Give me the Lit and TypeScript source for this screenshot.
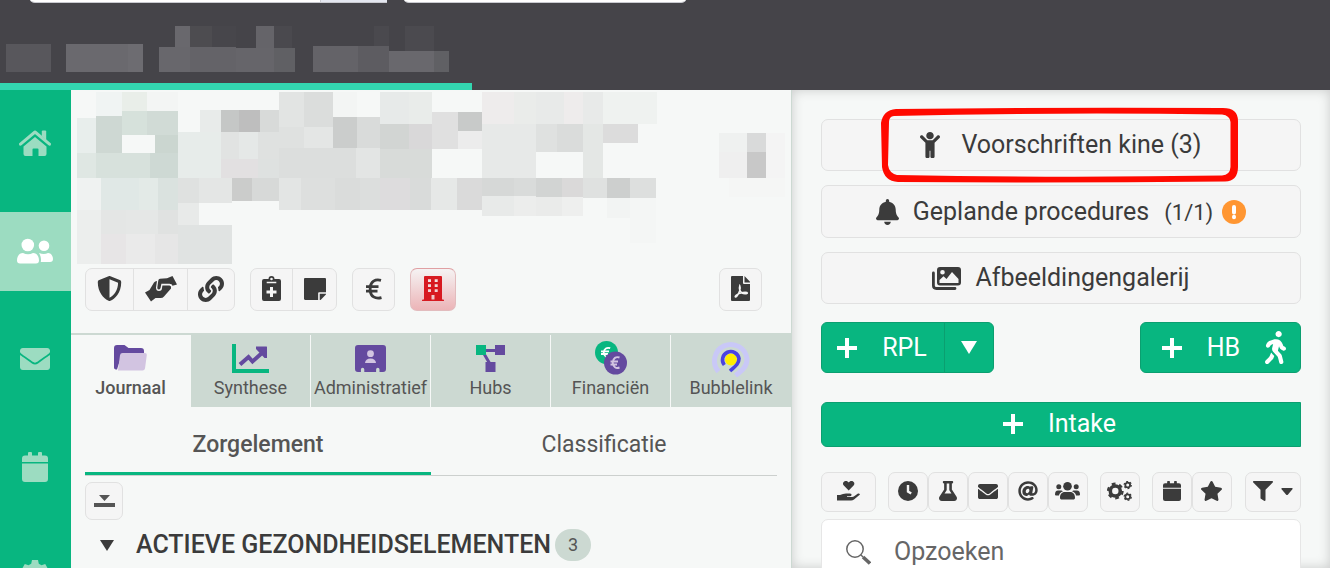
import { LitElement, html, svg, css, type TemplateResult, type SVGTemplateResult } from "lit";
import { customElement, property, state } from "lit/decorators.js";
import { classMap } from "lit/directives/class-map.js";

type Block = [number, number, number, number, string];
type Glyph = { box: string; body: SVGTemplateResult };

const GLYPHS: Record<string, Glyph> = {
  home: {
    box: "0 0 32 26",
    body: svg`<path d="M1.5 14.2 16 2l14.5 12.2" fill="none" stroke="currentColor" stroke-width="3" stroke-linecap="round" stroke-linejoin="round"/><path d="M22.800 1.500q0-1 1-1h2.400q1 0 1 1V10l-4.400-3.700z"/><path d="M4.500 16.500 16 7l11.500 9.500V24q0 2-2 2h-6v-6.500q0-1-1-1h-4q-1 0-1 1V26h-7q-2 0-2-2z"/>`,
  },
  users: {
    box: "0 0 36 26",
    body: svg`<circle cx="10.800" cy="7" r="6.300"/><circle cx="27" cy="7.700" r="5.300"/><path d="M6 15q5 2.500 10 0c4 0 6 3.500 6 7.500 0 2-1 3-3 3H3c-2 0-3-1-3-3 0-4 2-7.500 6-7.500z"/><path d="M22 15q5 2 9 0c3 0 5 3 5 6 0 2-1 3-3 3h-9.200c.6-3-.1-6.300-1.800-9z"/>`,
  },
  mail: {
    box: "0 64 512 384",
    body: svg`<path d="M502.300 190.800c3.900-3.100 9.700-.2 9.700 4.700V400c0 26.500-21.500 48-48 48H48c-26.500 0-48-21.500-48-48V195.600c0-5 5.700-7.800 9.700-4.700 22.400 17.400 52.100 39.500 154.100 113.600 21.100 15.400 56.700 47.800 92.200 47.600 35.700.3 72-32.800 92.300-47.600 102-74.100 131.600-96.300 154-113.700zM256 320c23.200.4 56.600-29.200 73.400-41.400 132.700-96.300 142.800-104.700 173.400-128.700 5.800-4.500 9.200-11.500 9.200-18.900v-19c0-26.500-21.500-48-48-48H48c-26.500 0-48 21.500-48 48v19c0 7.400 3.400 14.300 9.200 18.900 30.600 23.900 40.700 32.400 173.400 128.700 16.800 12.200 50.200 41.800 73.400 41.400z"/>`,
  },
  calendar: {
    box: "0 0 26 30",
    body: svg`<path d="M6 1q0-1 1-1h2q1 0 1 1v2.500h6V1q0-1 1-1h2q1 0 1 1v2.500h3q3 0 3 3V10H0V6.500q0-3 3-3h3zM0 11.500h26V27q0 3-3 3H3q-3 0-3-3z"/>`,
  },
  gear: {
    box: "0 0 30 30",
    body: svg`<path fill-rule="evenodd" d="M12 0h6l.8 3.800 2.700 1.500L25.200 4l3 5.200-2.900 2.600v3.400l2.900 2.600-3 5.200-3.700-1.300-2.700 1.500L18 28h-6l-.8-4.800-2.700-1.500L4.800 23l-3-5.200 2.900-2.600v-3.400L1.800 9.200l3-5.200 3.700 1.300 2.700-1.500zM15 9.500a4.500 4.500 0 1 0 0 9 4.500 4.500 0 0 0 0-9z"/>`,
  },
  shield: {
    box: "0 0 512 512",
    body: svg`<path d="M466.500 83.700l-192-80a48.150 48.150 0 0 0-36.900 0l-192 80C27.700 91.100 16 108.600 16 128c0 198.500 114.500 335.700 221.500 380.300 11.800 4.900 25.100 4.900 36.900 0C360.100 472.600 496 349.300 496 128c0-19.400-11.700-36.900-29.500-44.300zM256.100 446.300l-.1-381 175.900 73.300c-3.300 151.400-82.100 261.100-175.800 307.700z"/>`,
  },
  hands: {
    box: "0 0 32 26",
    body: svg`<path d="M0 16.500 4.500 14 9 6.500q1-1.500 3-1.500l-1 6.500q0 3.500 3 3.500t3-3l.4-2.500h7.100l1.500 1v2l-7 8q-1.200 1.500-3.500 1.500h-5L6 25.500z"/><path d="M32 8.500 27.500 0 22 2.300l-7 .5q-1.400.2-1.700 1.600l-1 7q-.2 1.900 1.400 2.100 1.600.1 1.900-1.700l.8-4h8.100q2.500 0 3 2z"/>`,
  },
  link: {
    box: "0 0 512 512",
    body: svg`<path d="M326.612 185.391c59.747 59.809 58.927 155.698.36 214.590-.11.120-.24.250-.36.370l-67.200 67.200c-59.270 59.270-155.699 59.262-214.960 0-59.270-59.260-59.270-155.700 0-214.960l37.106-37.106c9.840-9.840 26.786-3.300 27.294 10.606.648 17.722 3.826 35.527 9.690 52.721 1.986 5.822.567 12.262-3.783 16.612l-13.087 13.087c-28.026 28.026-28.905 73.660-1.155 101.960 28.024 28.579 74.086 28.749 102.325.510l67.200-67.190c28.191-28.191 28.073-73.757 0-101.830-3.701-3.694-7.429-6.564-10.341-8.569a16.037 16.037 0 0 1-6.947-12.606c-.396-10.567 3.348-21.456 11.698-29.806l21.054-21.055c5.521-5.521 14.182-6.199 20.584-1.731a152.482 152.482 0 0 1 20.522 17.197zM467.547 44.449c-59.261-59.262-155.690-59.270-214.960 0l-67.200 67.200c-.12.120-.25.250-.36.370-58.566 58.892-59.387 154.781.36 214.590a152.454 152.454 0 0 0 20.521 17.196c6.402 4.468 15.064 3.789 20.584-1.731l21.054-21.055c8.350-8.350 12.094-19.239 11.698-29.806a16.037 16.037 0 0 0-6.947-12.606c-2.912-2.005-6.640-4.875-10.341-8.569-28.073-28.073-28.191-73.639 0-101.830l67.200-67.190c28.239-28.239 74.300-28.069 102.325.510 27.750 28.300 26.872 73.934-1.155 101.960l-13.087 13.087c-4.350 4.350-5.769 10.790-3.783 16.612 5.864 17.194 9.042 34.999 9.690 52.721.509 13.906 17.454 20.446 27.294 10.606l37.106-37.106c59.271-59.259 59.271-155.699.001-214.959z"/>`,
  },
  clipboard: {
    box: "0 0 19 25",
    body: svg`<path fill-rule="evenodd" d="M2 3h4.500a3 3 0 0 1 6 0H17q2 0 2 2v18q0 2-2 2H2q-2 0-2-2V5q0-2 2-2zm7.500-1.300a1.300 1.300 0 1 0 0 2.600 1.300 1.300 0 0 0 0-2.600zM4.700 5.700v1.600h9.600V5.700zM8 11v3.500H4.500v3H8V21h3v-3.500h3.500v-3H11V11z"/>`,
  },
  note: {
    box: "0 32 448 448",
    body: svg`<path d="M312 320h136V56c0-13.300-10.700-24-24-24H24C10.700 32 0 42.700 0 56v400c0 13.300 10.700 24 24 24h264V344c0-13.200 10.800-24 24-24zm129 55l-98 98c-4.500 4.500-10.600 7-17 7h-6V352h128v6.100c0 6.300-2.500 12.400-7 16.900z"/>`,
  },
  euro: {
    box: "0 0 16 22",
    body: svg`<path d="M15 2.300C9 .6 4.800 3.800 4.200 9v4C4.800 18.200 9 21.400 15.500 19.700M0 8.700h12.500M0 13.200h11.500" fill="none" stroke="currentColor" stroke-width="2.800"/>`,
  },
  building: {
    box: "0 0 22 25",
    body: svg`<path fill-rule="evenodd" d="M3 0h16q1 0 1 1v22.500h1q1 0 1 1v.5H0v-.5q0-1 1-1h1V1q0-1 1-1zm3 3.300v2.700h3V3.300zm0 5v2.700h3V8.300zm0 5V16h3v-2.700zm6.700-10v2.700h3V3.300zm0 5v2.700h3V8.300zm0 5V16h3v-2.700zM9.500 19v4.500h3V19z"/>`,
  },
  pdf: {
    box: "0 0 19 25",
    body: svg`<path d="M1 0h11v7q0 1 1 1h6v16q0 1-1 1H1q-1 0-1-1V1q0-1 1-1zM13.500 0 19 5.700v.8h-5.500z"/><path d="M8.800 9.800c-.8 2.500.2 5.500 2.200 7.200 1.600 1 5.500.7 5.400.1-.5-1.500-8-.6-11.300 2.200-1.800 1.700-.6 2.600.9.700 2.200-2.700 4-7.700 2.800-10.200z" fill="none" stroke="#f5f5f5" stroke-width="1.500"/>`,
  },
  folder: {
    box: "0 0 33 26",
    body: svg`<path d="M0 3q0-3 3-3h7.500l4 3H27q3 0 3 3v3H8L3 24.500q-3 0-3-2z" fill="#644a9f"/><path d="M8.500 8H31q2 0 1.800 2L31 23.500q-.4 2-2.500 2H4L6 10.300Q6.300 8 8.500 8z" fill="#d2c4e1"/>`,
  },
  chart: {
    box: "0 0 37 29",
    body: svg`<path d="M2 0v27h35" fill="none" stroke="#08b680" stroke-width="4"/><path d="M8 20.500 16.500 13l4 4.500L30 9" fill="none" stroke="#644a9f" stroke-width="4"/><path d="M24 2.500h10.500q.5 0 .5.500v11L32.500 14 24 5z" fill="#644a9f"/>`,
  },
  contact: {
    box: "0 0 31 27",
    body: svg`<path d="M3 0h25q3 0 3 3v21q0 3-3 3h-3.500v-2.500a1.700 1.700 0 0 0-3.400 0V27H9.300v-2.500a1.700 1.700 0 0 0-3.400 0V27H3q-3 0-3-3V3q0-3 3-3z" fill="#644a9f"/><circle cx="15.500" cy="8.700" r="3.400" fill="#d2c4e1"/><path d="M10 18q.5-4.500 5.500-4.500T21 18z" fill="#d2c4e1"/>`,
  },
  hubs: {
    box: "0 0 29 27",
    body: svg`<path d="M6 5.500h18M7 7l7 12" fill="none" stroke="#644a9f" stroke-width="3"/><path d="M19 0h10v10H19zM9.500 17h10v10h-10z" fill="#644a9f"/><path d="M0 0h10v10H0z" fill="#08b680"/>`,
  },
  coins: {
    box: "0 0 32 34",
    body: svg`<circle cx="11.500" cy="11.500" r="11.500" fill="#08b680"/><path d="M15.200 7.200C12 6 9 7.500 8.700 11.500c.3 4 3.300 5.500 6 4.500M6 10.300h8M6 13h7" fill="none" stroke="#fff" stroke-width="1.800"/><circle cx="20.500" cy="22" r="11.500" fill="#644a9f"/><path d="M24.500 16.500C21 15.300 18.200 17 17.700 21.500c.5 4.700 3.300 6.300 6.800 5M15.500 20.500H23M15.500 23.500H22" fill="none" stroke="#d2c4e1" stroke-width="1.900"/>`,
  },
  bubble: {
    box: "0 0 38 38",
    body: svg`<path d="M6.500 32.500A16.300 16.300 0 1 1 35 20c0 8-5.500 12-11.500 16.500" fill="none" stroke="#c9c8f7" stroke-width="5"/><circle cx="19" cy="20.500" r="6" fill="#ffee00"/><path d="M12.300 26A8.300 8.300 0 1 1 27 19.500c0 5.500-4 8-9 12.500" fill="none" stroke="#4a43e0" stroke-width="3.600"/>`,
  },
  collapse: {
    box: "0 0 21 12",
    body: svg`<path d="M5 0h11l-5.500 6zM0 8h21v4H0z"/>`,
  },
  child: {
    box: "0 0 384 512",
    body: svg`<path d="M120 72c0-39.765 32.235-72 72-72s72 32.235 72 72c0 39.764-32.235 72-72 72s-72-32.236-72-72zm254.627 1.373c-12.496-12.497-32.758-12.497-45.254 0L242.745 160H141.254L54.627 73.373c-12.496-12.497-32.758-12.497-45.254 0-12.497 12.497-12.497 32.758 0 45.255L104 213.254V480c0 17.673 14.327 32 32 32h16c17.673 0 32-14.327 32-32V368h16v112c0 17.673 14.327 32 32 32h16c17.673 0 32-14.327 32-32V213.254l94.627-94.627c12.497-12.496 12.497-32.757 0-45.254z"/>`,
  },
  bell: {
    box: "0 0 448 512",
    body: svg`<path d="M224 512c35.320 0 63.970-28.650 63.970-64H160.030c0 35.350 28.650 64 63.970 64zm215.390-149.710c-19.320-20.760-55.470-51.990-55.470-154.290 0-77.700-54.480-139.900-127.940-155.160V32c0-17.670-14.320-32-31.980-32s-31.980 14.330-31.980 32v20.840C118.560 68.100 64.080 130.300 64.080 208c0 102.300-36.150 133.530-55.470 154.290-6 6.450-8.660 14.160-8.610 21.710.11 16.400 12.980 32 32.100 32h383.800c19.120 0 32-15.600 32.100-32 .05-7.550-2.610-15.270-8.610-21.710z"/>`,
  },
  images: {
    box: "0 0 29 23",
    body: svg`<path d="M1.400 6v12.500q0 3 3 3H23" fill="none" stroke="currentColor" stroke-width="2.800" stroke-linecap="round"/><path fill-rule="evenodd" d="M8 0h18q3 0 3 3v12.500q0 3-3 3H8q-3 0-3-3V3q0-3 3-3zm2.500 3a2.300 2.300 0 1 0 0 4.600 2.300 2.300 0 0 0 0-4.600zM20 5l-5.500 7-3-2.800L7.500 13v3h19v-4z"/>`,
  },
  alert: {
    box: "0 0 24 24",
    body: svg`<circle cx="12" cy="12" r="12" fill="#ff9632"/><path d="M12 7v5.500M12 16.800v.4" stroke="#fff" stroke-width="4" stroke-linecap="round"/>`,
  },
  plus: { box: "0 0 20 20", body: svg`<path d="M8 0h4v8h8v4h-8v8H8v-8H0V8h8z"/>` },
  down: { box: "0 0 16 13", body: svg`<path d="M0 0h16L8 13z"/>` },
  caret: { box: "0 0 12 7", body: svg`<path d="M1 0h10q1 .3.400 1.300L7 6.500q-1 1-2 0L.6 1.300Q0 .3 1 0z"/>` },
  walk: {
    box: "0 0 320 512",
    body: svg`<path d="M208 96c26.500 0 48-21.500 48-48S234.500 0 208 0s-48 21.500-48 48 21.500 48 48 48zm94.500 149.100l-23.300-11.800-9.700-29.400c-14.700-44.600-55.700-75.800-102.200-75.900-36-.1-55.900 10.100-93.300 25.200-21.600 8.700-39.300 25.200-49.700 46.200L17.600 213c-7.800 15.800-1.500 35 14.200 42.900 15.600 7.900 34.600 1.500 42.500-14.300L81 228c3.500-7 9.300-12.500 16.500-15.400l26.800-10.800-15.200 60.700c-5.200 20.800.4 42.900 14.900 58.800l59.900 65.400c7.200 7.900 12.300 17.400 14.900 27.700l18.300 73.300c4.300 17.100 21.700 27.600 38.800 23.300 17.100-4.300 27.600-21.700 23.300-38.800l-22.200-89c-2.600-10.300-7.700-19.900-14.900-27.700l-45.500-49.700 17.200-68.700 5.500 16.500c5.300 16.100 16.700 29.400 31.700 37l23.300 11.800c15.600 7.900 34.600 1.500 42.500-14.300 7.700-15.700 1.400-35.100-14.300-43zM73.600 385.800c-3.200 8.100-8 15.400-14.200 21.500l-50 50.100c-12.500 12.500-12.500 32.800 0 45.300s32.700 12.500 45.200 0l59.400-59.400c6.100-6.100 10.900-13.400 14.200-21.500l13.500-33.800c-55.300-60.300-38.700-41.800-47.400-53.700l-20.700 51.500z"/>`,
  },
  care: {
    box: "0 0 23 20",
    body: svg`<path d="M11.700 9.500 6.800 4.600C5 2.500 6.500 0 8.800 0c1.400 0 2.300.6 2.900 1.600C12.300.6 13.200 0 14.500 0c2.300 0 3.900 2.500 2.100 4.600z"/><path d="M0 14h3q3-1.500 6-1.500h4q2 .2 1.500 1.700-.4 1-2 1H10v.9h5q1.300 0 2.500-1l3.500-2.600q1.500-.3 2 1l-6 5q-1.200 1-3 1H0z"/>`,
  },
  clock: {
    box: "0 0 20 20",
    body: svg`<circle cx="10" cy="10" r="10"/><path d="M10 4v6.500l3.200 2" fill="none" stroke="#f5f5f5" stroke-width="2.400"/>`,
  },
  flask: {
    box: "0 0 448 512",
    body: svg`<path d="M437.200 403.500L320 215V64h8c13.300 0 24-10.700 24-24V24c0-13.300-10.700-24-24-24H120c-13.300 0-24 10.700-24 24v16c0 13.300 10.700 24 24 24h8v151L10.800 403.500C-18.500 450.600 15.300 512 70.900 512h306.200c55.700 0 89.400-61.500 60.100-108.500zM137.900 320l48.200-77.600c3.700-5.200 5.800-11.600 5.800-18.400V64h64v160c0 6.900 2.200 13.200 5.800 18.400l48.200 77.600h-172z"/>`,
  },
  at: {
    box: "0 0 512 512",
    body: svg`<path d="M256 8C118.941 8 8 118.919 8 256c0 137.059 110.919 248 248 248 48.154 0 95.342-14.140 135.408-40.223 12.005-7.815 14.625-24.288 5.552-35.372l-10.177-12.433c-7.671-9.371-21.179-11.667-31.373-5.129C325.920 429.757 291.314 440 256 440c-101.458 0-184-82.542-184-184S154.542 72 256 72c100.139 0 184 57.619 184 160 0 38.786-21.093 79.742-58.170 83.693-17.349-.454-16.910-12.857-13.476-30.024l23.433-121.110C394.653 149.750 383.308 136 368.225 136h-44.981a13.518 13.518 0 0 0-13.432 11.993l-.010.092c-14.697-17.901-40.448-21.775-59.971-21.775-74.580 0-137.831 62.234-137.831 151.460 0 65.303 36.785 105.870 96 105.870 26.984 0 57.369-15.637 74.991-38.333 9.522 34.104 40.613 34.104 70.671 34.104C462.609 379.410 504 307.798 504 232 504 95.653 394.023 8 256 8zm-21.680 304.430c-22.249 0-36.070-15.623-36.070-40.771 0-44.993 30.779-72.729 58.630-72.729 22.292 0 35.601 15.241 35.601 40.770 0 45.061-33.875 72.730-58.161 72.730z"/>`,
  },
  group: {
    box: "0 0 25 18",
    body: svg`<circle cx="12.500" cy="4.300" r="4.300"/><circle cx="3.800" cy="4.800" r="2.500"/><circle cx="21.200" cy="4.800" r="2.500"/><path d="M10 10h5c3.500 0 5 2.500 5 5.500 0 1.500-.5 2-2 2H7c-1.500 0-2-.5-2-2C5 12.500 6.500 10 10 10zM3 8.500h3.500L8 9.300Q4.500 10.500 4 13.500H1q-1 0-1-1 0-4 3-4zM22 8.500h-3.500l-1.500.8q3.500 1.200 4 4.200h3q1 0 1-1 0-4-3-4z"/>`,
  },
  gears: {
    box: "0 0 25 20",
    body: svg`<circle cx="8.300" cy="10" r="5" fill="none" stroke="currentColor" stroke-width="3.600"/><circle cx="8.300" cy="10" r="7.300" fill="none" stroke="currentColor" stroke-width="2.200" stroke-dasharray="3.820"/><circle cx="20.700" cy="4" r="2.400" fill="none" stroke="currentColor" stroke-width="1.800"/><circle cx="20.700" cy="4" r="3.600" fill="none" stroke="currentColor" stroke-width="1.200" stroke-dasharray="1.880"/><circle cx="20.700" cy="15.800" r="2.400" fill="none" stroke="currentColor" stroke-width="1.800"/><circle cx="20.700" cy="15.800" r="3.600" fill="none" stroke="currentColor" stroke-width="1.200" stroke-dasharray="1.880"/>`,
  },
  star: {
    box: "20 0 536 512",
    body: svg`<path d="M259.300 17.800L194 150.200 47.900 171.500c-26.200 3.800-36.700 36.100-17.700 54.600l105.700 103-25 145.500c-4.500 26.300 23.200 46 46.400 33.700L288 439.600l130.700 68.700c23.200 12.200 50.900-7.400 46.400-33.700l-25-145.500 105.700-103c19-18.500 8.500-50.800-17.700-54.600L382 150.200 316.700 17.800c-11.700-23.600-45.600-23.900-57.400 0z"/>`,
  },
  filter: {
    box: "0 0 512 512",
    body: svg`<path d="M487.976 0H24.028C2.710 0-8.047 25.866 7.058 40.971L192 225.941V432c0 7.831 3.821 15.170 10.237 19.662l80 55.980C298.020 518.690 320 507.493 320 487.980V225.941l184.947-184.970C520.021 25.896 509.338 0 487.976 0z"/>`,
  },
  search: {
    box: "0 0 25 25",
    body: svg`<circle cx="9" cy="9" r="8.200" fill="none" stroke="currentColor" stroke-width="1.500"/><path d="m15 15 2 2" stroke="currentColor" stroke-width="1.500"/><path d="m17 17 7 6.500" stroke="currentColor" stroke-width="3.500"/>`,
  },
};

const icon = (name: string, width: number, height: number) =>
  html`<svg class="icon" width=${width} height=${height} viewBox=${GLYPHS[name].box} preserveAspectRatio="none" aria-hidden="true">${GLYPHS[name].body}</svg>`;

const MENU_BLOCKS: Block[] = [
  [6, 44, 45, 28, "#58575c"], [66, 44, 62, 28, "#6a696e"], [128, 44, 15, 28, "#6d6c71"],
  [159, 47, 31, 25, "#68676c"], [175, 26, 15, 21, "#69686d"], [190, 47, 46, 25, "#646368"],
  [190, 26, 22, 21, "#4d4c50"], [212, 26, 24, 21, "#47464b"], [236, 48, 38, 24, "#66656a"],
  [256, 26, 18, 22, "#656469"], [274, 48, 21, 24, "#606064"], [274, 26, 18, 22, "#4a494e"],
  [313, 46, 45, 26, "#646368"], [358, 46, 31, 26, "#5d5c61"], [389, 51, 45, 21, "#69686d"],
  [434, 51, 15, 21, "#606064"], [374, 26, 15, 20, "#4a494e"], [405, 26, 29, 25, "#4b4a4f"],
];

const PATIENT_BLOCKS: Block[] = [
  [96, 92, 26, 24, "#f0f4f3"], [122, 92, 25, 19, "#e9eee9"], [147, 92, 31, 19, "#f3f5f4"],
  [77, 118, 19, 35, "#e8eeec"], [96, 116, 26, 37, "#ced8d3"], [122, 111, 25, 24, "#d6e1db"],
  [147, 111, 31, 24, "#d1dbd6"], [155, 135, 23, 18, "#cbd6d0"], [77, 153, 19, 25, "#dfe7e3"],
  [96, 153, 54, 25, "#d7e1dc"], [150, 153, 28, 25, "#ced9d4"], [200, 110, 21, 22, "#e8ebea"],
  [221, 110, 18, 22, "#c5c7c6"], [239, 110, 21, 22, "#bebebe"], [260, 110, 19, 22, "#d8dad9"],
  [178, 132, 43, 46, "#e7ecea"], [221, 132, 18, 27, "#e1e3e2"], [239, 132, 19, 27, "#e5e8e7"],
  [258, 132, 21, 27, "#dfe1e0"], [221, 159, 37, 19, "#e2e0e1"], [258, 159, 21, 19, "#dee1e0"],
  [77, 178, 24, 32, "#eff2f1"], [101, 178, 38, 32, "#e0e8e6"], [139, 178, 19, 32, "#e3eae7"],
  [158, 178, 20, 32, "#dae2df"], [178, 178, 21, 25, "#dfe1e0"], [199, 178, 33, 25, "#e4e6e5"],
  [232, 178, 20, 23, "#cbcccb"], [252, 178, 27, 23, "#d7d9d8"], [178, 203, 21, 22, "#e8eae9"],
  [77, 210, 24, 54, "#eceeed"], [101, 210, 25, 24, "#e4e6e5"], [126, 210, 32, 24, "#e5e7e6"],
  [158, 210, 20, 24, "#e0e2e1"], [101, 234, 25, 30, "#e7e5e6"], [126, 234, 29, 30, "#eaeaea"],
  [155, 234, 23, 30, "#e6e6e6"], [178, 225, 54, 39, "#e0e3e2"],
  [279, 92, 25, 35, "#e2e4e3"], [304, 92, 29, 35, "#dbdddc"], [333, 92, 24, 25, "#f3f5f4"],
  [279, 127, 25, 21, "#dfe1e0"], [304, 127, 29, 21, "#e4e6e5"], [333, 117, 24, 31, "#cbcdcc"],
  [357, 117, 23, 31, "#d9dbda"], [380, 92, 29, 32, "#e7eae9"], [409, 92, 23, 32, "#e9ecea"],
  [380, 124, 29, 25, "#d2d5d3"], [409, 124, 23, 25, "#d9d8d9"], [432, 112, 26, 37, "#e0e0e0"],
  [458, 112, 24, 19, "#c8cac9"], [458, 131, 24, 18, "#ececec"], [279, 148, 77, 30, "#dcdedd"],
  [356, 148, 24, 30, "#e3e5e4"], [380, 149, 52, 29, "#d8dbd9"], [279, 178, 22, 32, "#e3e5e4"],
  [301, 178, 34, 32, "#dddfde"], [335, 178, 25, 32, "#dadcdb"], [360, 178, 20, 32, "#dcdedd"],
  [380, 178, 30, 32, "#dddcdd"], [410, 178, 21, 32, "#d9dbda"], [431, 178, 26, 32, "#e6e8e7"],
  [457, 178, 25, 32, "#dadada"],
  [482, 92, 32, 32, "#eeecec"], [514, 92, 22, 32, "#eaecea"], [536, 92, 28, 32, "#e8eae9"],
  [564, 92, 19, 32, "#eeecec"], [583, 92, 20, 32, "#e8eae9"], [603, 92, 54, 32, "#eff2f0"],
  [482, 124, 54, 54, "#e7e9e8"], [536, 124, 21, 28, "#dfe1e0"], [557, 124, 26, 28, "#dadcdb"],
  [583, 124, 20, 54, "#e4e7e5"], [603, 124, 35, 19, "#dcdcdc"], [482, 178, 32, 18, "#d6d8d7"],
  [514, 178, 22, 18, "#d9dbda"], [536, 178, 26, 19, "#d2d4d3"], [562, 178, 21, 19, "#dad9d9"],
  [583, 178, 24, 20, "#dfe1e0"], [607, 178, 23, 20, "#cdcfce"], [630, 178, 26, 20, "#dddfde"],
  [482, 196, 32, 20, "#e8eae9"], [514, 196, 22, 20, "#ecedec"], [536, 197, 26, 19, "#eaebea"],
  [562, 197, 21, 19, "#eeefee"], [607, 198, 23, 20, "#f2f4f3"], [630, 198, 26, 45, "#f4f6f5"],
  [719, 133, 28, 19, "#eff1f0"], [747, 133, 19, 19, "#d9dada"], [766, 133, 19, 45, "#f4f4f4"],
  [719, 152, 28, 26, "#efefef"], [747, 152, 19, 26, "#c8c8c8"], [729, 178, 56, 19, "#f5f6f5"],
];

const mosaic = (blocks: Block[], x: number, y: number, w: number, h: number) =>
  html`<svg class="mosaic" width=${w} height=${h} viewBox="${x} ${y} ${w} ${h}" shape-rendering="crispEdges" aria-hidden="true">
    ${blocks.map(([bx, by, bw, bh, c]) => svg`<rect x=${bx} y=${by} width=${bw} height=${bh} fill=${c}/>`)}
  </svg>`;

const base = css`
  * { box-sizing: border-box; }
  button, input { font: inherit; color: inherit; margin: 0; padding: 0; border: 0; background: none; }
  button { cursor: pointer; display: flex; align-items: center; justify-content: center; }
  a { color: inherit; text-decoration: none; }
  h2 { margin: 0; }
  .icon, .mosaic { display: block; flex: none; fill: currentColor; }
`;

@customElement("top-bar")
class TopBar extends LitElement {
  static styles = [base, css`
    :host { display: flex; flex-direction: column; height: 90px; background: #454449; }
    .fields { display: flex; align-items: flex-end; gap: 16px; height: 3px; padding-left: 29px; overflow: hidden; }
    .lookup { display: flex; flex: none; height: 36px; width: 358px; border-bottom: 1px solid #c9cad0; border-radius: 6px 0 0 6px; overflow: hidden; background: #fff; }
    .lookup input { flex: 1; min-width: 0; }
    .lookup button { width: 67px; background: #e4e7f0; border-left: 1px solid #c9cad0; }
    .field { flex: none; width: 284px; height: 36px; background: #fff; border-bottom: 1px solid #c9cad0; border-radius: 6px; }
    .menu { flex: 1; padding: 23px 0 0 6px; }
    .progress { width: 472px; max-width: 100%; height: 7px; background: #33d6b0; }
  `];
  render() {
    return html`
      <div class="fields">
        <div class="lookup"><input type="text" aria-label="Zoeken" /><button aria-label="Zoek"></button></div>
        <input class="field" type="text" aria-label="Patiënt" />
      </div>
      <div class="menu">${mosaic(MENU_BLOCKS, 6, 26, 443, 46)}</div>
      <div class="progress"></div>`;
  }
}

@customElement("side-nav")
class SideNav extends LitElement {
  static styles = [base, css`
    :host { display: flex; flex-direction: column; gap: 29px; padding-top: 14px; background: #08b680; color: #9cdcc1; overflow: hidden; }
    .item { display: flex; align-items: center; justify-content: center; flex: none; height: 79px; padding: 0 2px 2px 0; }
    .active { background: #9cdcc1; color: #fff; }
  `];
  render() {
    const items: [string, string, number, number][] = [
      ["home", "Start", 32, 26], ["users", "Patiënten", 36, 26], ["mail", "Berichten", 30, 22],
      ["calendar", "Agenda", 26, 30], ["gear", "Instellingen", 30, 30],
    ];
    return items.map(([g, label, w, h]) => html`
      <a href="#${g}" aria-label=${label} class=${classMap({ item: true, active: g === "users" })}>${icon(g, w, h)}</a>`);
  }
}

@customElement("patient-panel")
class PatientPanel extends LitElement {
  @state() tab = "Journaal";
  @state() view = "Zorgelement";

  static styles = [base, css`
    :host { display: block; min-width: 0; overflow: hidden; color: #555; }
    .mosaic { margin-bottom: 4px; }
    .tools { display: flex; gap: 15px; padding: 0 29px 0 14px; margin-bottom: 22px; color: #3b3b3b; }
    .set { display: flex; height: 43px; border: 1px solid #e1e1e1; border-radius: 7px; background: #f5f5f5; overflow: hidden; }
    .set button { padding-bottom: 2px; }
    .set button + button { border-left: 1px solid #e1e1e1; }
    .s { width: 41px; }
    .m { width: 44px; }
    .l { width: 47px; }
    .xl { width: 54px; }
    .urgent { border-color: #e2bcbe; border-top-color: #e0a0a3; background: linear-gradient(#f5f3f3, #ecb4b7); color: #d71920; }
    .end { margin-left: auto; }
    .tabs { display: grid; grid-template-columns: repeat(6, 1fr); border-top: 2px solid #ccd9d2; }
    .tab { flex-direction: column; justify-content: flex-start; height: 72px; min-width: 0; background: #ccd9d2; border-right: 1px solid #f6f8f7; font-size: 18px; line-height: 22px; }
    .tab:last-child { border-right: 0; }
    .tab.on { background: none; font-weight: 500; }
    .art { display: flex; align-items: center; justify-content: center; height: 38px; margin-top: 4px; }
    .tab span { height: 22px; }
    .views { display: grid; grid-template-columns: 1fr 1fr; margin: 0 14px 6px; border-bottom: 1px solid #ccd0ce; }
    .view { height: 68px; padding-top: 11px; border-bottom: 3px solid transparent; font-size: 23px; line-height: 28px; }
    .view.on { font-weight: 500; border-color: #08b680; }
    .fold { width: 38px; height: 38px; margin-left: 14px; border: 1px solid #e1e1e1; border-radius: 7px; background: #f5f5f5; }
    .section { display: flex; align-items: center; margin: 9px 0 0 29px; color: #3b3b3b; }
    .section h2 { margin: 0 4px 0 22px; font-size: 25px; line-height: 32px; font-weight: 500; white-space: nowrap; }
    .count { padding: 4px 13px; border-radius: 16px; background: #ccd9d2; color: #555; font-size: 18px; line-height: 24px; }
  `];

  render() {
    const tabs: [string, string, number, number][] = [
      ["Journaal", "folder", 33, 26], ["Synthese", "chart", 37, 29], ["Administratief", "contact", 31, 27],
      ["Hubs", "hubs", 29, 27], ["Financiën", "coins", 32, 34], ["Bubblelink", "bubble", 38, 38],
    ];
    return html`
      ${mosaic(PATIENT_BLOCKS, 71, 90, 720, 174)}
      <div class="tools">
        <div class="set">
          <button class="l" aria-label="Toegang">${icon("shield", 25, 25)}</button>
          <button class="xl" aria-label="Therapeutische relatie">${icon("hands", 32, 26)}</button>
          <button class="l" aria-label="Koppeling">${icon("link", 26, 26)}</button>
        </div>
        <div class="set">
          <button class="s" aria-label="Medisch dossier">${icon("clipboard", 19, 25)}</button>
          <button class="m" aria-label="Nota">${icon("note", 22, 22)}</button>
        </div>
        <div class="set"><button class="s" aria-label="Facturatie">${icon("euro", 16, 22)}</button></div>
        <div class="set urgent"><button class="m" aria-label="Instelling">${icon("building", 22, 25)}</button></div>
        <div class="set end"><button class="s" aria-label="PDF">${icon("pdf", 19, 25)}</button></div>
      </div>
      <nav class="tabs">
        ${tabs.map(([label, g, w, h]) => html`
          <button class=${classMap({ tab: true, on: this.tab === label })} @click=${() => (this.tab = label)}>
            <div class="art">${icon(g, w, h)}</div><span>${label}</span>
          </button>`)}
      </nav>
      <div class="views">
        ${["Zorgelement", "Classificatie"].map((v) => html`
          <button class=${classMap({ view: true, on: this.view === v })} @click=${() => (this.view = v)}>${v}</button>`)}
      </div>
      <button class="fold" aria-label="Alles inklappen">${icon("collapse", 21, 12)}</button>
      <div class="section">
        <button aria-label="Inklappen">${icon("down", 14, 11)}</button>
        <h2>ACTIEVE GEZONDHEIDSELEMENTEN</h2>
        <span class="count">3</span>
      </div>`;
  }
}

@customElement("action-panel")
class ActionPanel extends LitElement {
  static styles = [base, css`
    :host { display: block; padding: 29px 29px 0; border-left: 1px solid #ccd9d2; color: #3b3b3b; overflow: hidden;
      box-shadow: inset 0 0 12px rgba(0, 0, 0, 0.18); }
    .stack { display: grid; gap: 14px; margin-bottom: 18px; }
    .spot { position: relative; display: grid; }
    .wide { min-height: 52px; border: 1px solid #e1e1e1; border-radius: 7px; background: #f5f5f5; font-size: 25px; line-height: 30px; white-space: nowrap; }
    .spot + .wide { min-height: 53px; }
    .wide .icon + span { margin-left: 14px; }
    .wide .person + span { margin-left: 21px; }
    .person { display: flex; }
    .wide small { margin: 2px 9px 0 15px; font-size: 22px; }
    .mark { position: absolute; left: 50%; top: -12px; margin-left: -181px; pointer-events: none; fill: #ff0a00; }
    .row { display: flex; justify-content: space-between; margin-bottom: 29px; }
    .green { display: flex; height: 51px; border: 1px solid #0b9f70; border-radius: 6px; background: #08b680; color: #fff; font-size: 25px; line-height: 30px; overflow: hidden; }
    .green button + button { border-left: 1px solid #0b9f70; }
    .rpl { width: 122px; gap: 25px; padding-right: 2px; }
    .drop { width: 49px; }
    .hb { width: 159px; gap: 25px; padding-left: 7px; }
    .intake { width: 100%; height: 45px; margin-bottom: 25px; gap: 25px; padding: 0 3px 2px 0; border-radius: 6px 0 0 6px; }
    .filters { display: flex; margin-bottom: 7px; }
    .filters button { height: 40px; width: 40px; padding: 0 1px 2px 0; border: 1px solid #e1e1e1; border-radius: 7px; background: #f5f5f5; }
    .filters .care { width: 55px; }
    .filters .sift { width: 56px; gap: 8px; margin-left: auto; }
    .bunch { display: flex; margin-left: 12px; }
    .search { display: flex; align-items: center; gap: 23px; height: 66px; padding: 0 24px; background: #fff; border: 1px solid #e6e6e6; border-radius: 7px; color: #666; }
    .search input { flex: 1; min-width: 0; font-size: 25px; line-height: 30px; outline: 0; }
    .search input::placeholder { color: #666; opacity: 1; }
  `];

  render(): TemplateResult {
    return html`
      <div class="stack">
        <div class="spot">
          <button class="wide"><div class="person">${icon("child", 20, 26)}</div><span>Voorschriften kine (3)</span></button>
          <svg class="mark" width="359" height="76" viewBox="0 0 359 76" aria-hidden="true">
            <path fill-rule="evenodd" d="M16 2Q180 0 343 1 358 1 358 14V60Q358 74 345 74.500 180 76 18 75 4 74 2 60L1 16Q3 3 16 2ZM14 9Q9 9.500 9 15L8 58Q9 66 17 68 180 71 342 68.500 350 68 350.500 60V15Q350 8.500 342 7.500 180 5 14 9Z"/>
          </svg>
        </div>
        <button class="wide">${icon("bell", 23, 26)}<span>Geplande procedures</span><small>(1/1)</small>${icon("alert", 24, 24)}</button>
        <button class="wide">${icon("images", 29, 23)}<span>Afbeeldingengalerij</span></button>
      </div>
      <div class="row">
        <div class="green">
          <button class="rpl">${icon("plus", 20, 20)}RPL</button>
          <button class="drop" aria-label="Meer">${icon("down", 16, 13)}</button>
        </div>
        <div class="green"><button class="hb">${icon("plus", 20, 20)}HB${icon("walk", 21, 33)}</button></div>
      </div>
      <button class="green intake">${icon("plus", 20, 20)}Intake</button>
      <div class="filters">
        <button class="care" aria-label="Zorg">${icon("care", 23, 20)}</button>
        <div class="bunch">
          <button aria-label="Historiek">${icon("clock", 20, 20)}</button>
          <button aria-label="Labo">${icon("flask", 18, 20)}</button>
          <button aria-label="Berichten">${icon("mail", 20, 15)}</button>
          <button aria-label="E-mail">${icon("at", 20, 20)}</button>
          <button aria-label="Team">${icon("group", 25, 18)}</button>
        </div>
        <div class="bunch"><button aria-label="Instellingen">${icon("gears", 25, 20)}</button></div>
        <div class="bunch">
          <button aria-label="Agenda">${icon("calendar", 18, 20)}</button>
          <button aria-label="Favorieten">${icon("star", 21, 20)}</button>
        </div>
        <button class="sift" aria-label="Filter">${icon("filter", 20, 20)}${icon("caret", 12, 7)}</button>
      </div>
      <label class="search">${icon("search", 25, 25)}<input type="search" placeholder="Opzoeken" aria-label="Opzoeken" /></label>`;
  }
}

@customElement("app-root")
class AppRoot extends LitElement {
  static styles = css`
    :host { display: flex; flex-direction: column; height: 100vh; overflow: hidden; background: #f6f8f7; font-family: Roboto, "Liberation Sans", sans-serif; }
    .body { flex: 1; min-height: 0; display: grid; grid-template-columns: 71px minmax(0, 1fr) 539px; }
  `;
  render() {
    return html`
      <top-bar></top-bar>
      <div class="body">
        <side-nav></side-nav>
        <patient-panel></patient-panel>
        <action-panel></action-panel>
      </div>`;
  }
}
